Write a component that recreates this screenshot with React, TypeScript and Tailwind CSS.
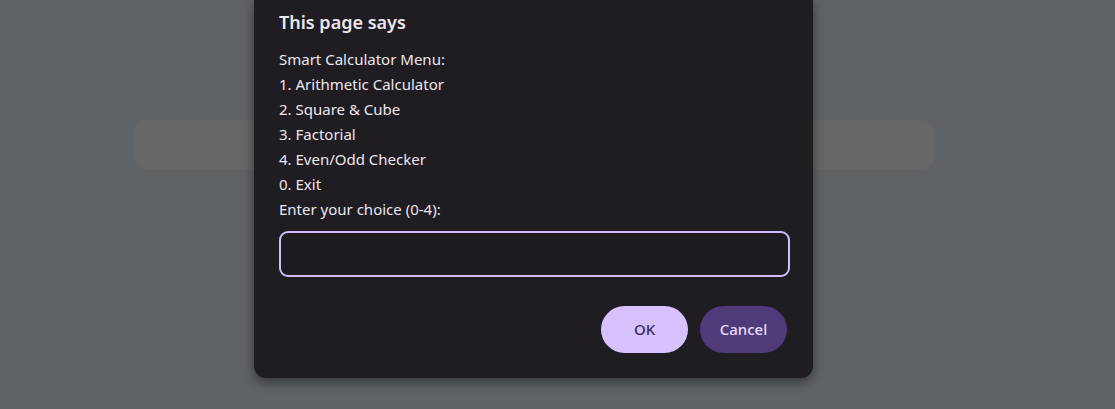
const lines = [
  "Smart Calculator Menu:",
  "1. Arithmetic Calculator",
  "2. Square & Cube",
  "3. Factorial",
  "4. Even/Odd Checker",
  "0. Exit",
  "Enter your choice (0-4):",
];

const App = () => {
  return (
    <div
      className="relative h-[409px] w-full overflow-hidden bg-[#5f6366] pt-[120px]"
      style={{ fontFamily: '"Noto Sans", "Open Sans", sans-serif' }}
    >
      {/* page card behind the dialog */}
      <div className="mx-[134px] h-[49px] w-[800px] rounded-xl bg-[#676767]" />

      {/* prompt dialog */}
      <div className="absolute left-[254px] top-0 w-[559px] rounded-b-xl bg-[#1f1d22] px-[25px] pb-[25px] pt-[9px] shadow-[0_4px_12px_rgba(0,0,0,0.45)]">
        <h2 className="text-[18px] font-semibold leading-[26px] text-[#ece7ee]">
          This page says
        </h2>
        <div className="mt-[12px] text-[15px] leading-[25px] text-[#ece7ee]">
          {lines.map((l) => (
            <div key={l}>{l}</div>
          ))}
        </div>
        <input
          type="text"
          className="mt-[9px] block h-[46px] w-[511px] rounded-[9px] border-2 border-[#d0bcff] bg-[#1c1b1f] px-3 text-[15px] text-[#e8e3ea] outline-none"
        />
        <div className="mt-[29px] flex justify-end gap-[12px] pr-[1px]">
          <button className="h-[47px] w-[87px] rounded-full bg-[#d7c2ff] text-[15px] font-medium text-[#3b2a63]">
            OK
          </button>
          <button className="h-[47px] w-[87px] rounded-full bg-[#4f3a7a] text-[15px] font-medium text-[#e9ddff]">
            Cancel
          </button>
        </div>
      </div>
    </div>
  );
};

export default App;
